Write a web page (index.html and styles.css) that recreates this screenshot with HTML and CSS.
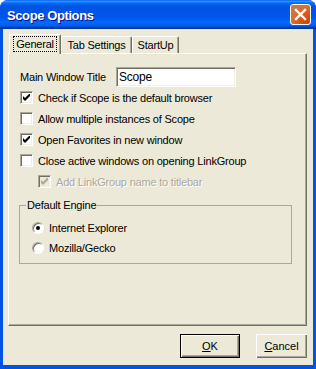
FILE: index.html
```html
<!DOCTYPE html>
<html lang="en">
<head>
  <meta charset="UTF-8">
  <title>Scope Options</title>
  <link rel="stylesheet" href="styles.css">
</head>
<body>
  <div class="window">
    <div class="titlebar">
      <span class="title">Scope Options</span>
      <div class="close">
        <svg width="13" height="13" viewBox="0 0 13 13">
          <path d="M2 2 L11 11 M11 2 L2 11" stroke="#fff" stroke-width="2.4" stroke-linecap="square" />
        </svg>
      </div>
    </div>

    <div class="client">
      <div class="tabs">
        <div class="tab active general"><span class="focus">General</span></div>
        <div class="tab settings">Tab Settings</div>
        <div class="tab startup">StartUp</div>
      </div>

      <div class="panel">
        <div class="field-row">
          <span class="field-label">Main Window Title</span>
          <div class="textbox">Scope</div>
        </div>

        <div class="options">
          <div class="check"><span class="box"><svg class="tick" width="7" height="7" viewBox="0 0 7 7"><polygon points="0,2 2,4 7,-1 7,2 2,7 0,5" /></svg></span>Check if Scope is the default browser</div>
          <div class="check"><span class="box"></span>Allow multiple instances of Scope</div>
          <div class="check"><span class="box"><svg class="tick" width="7" height="7" viewBox="0 0 7 7"><polygon points="0,2 2,4 7,-1 7,2 2,7 0,5" /></svg></span>Open Favorites in new window</div>
          <div class="check"><span class="box"></span>Close active windows on opening LinkGroup</div>
          <div class="check sub disabled"><span class="box"><svg class="tick" width="7" height="7" viewBox="0 0 7 7"><polygon points="0,2 2,4 7,-1 7,2 2,7 0,5" /></svg></span>Add LinkGroup name to titlebar</div>
        </div>

        <fieldset class="group">
          <legend>Default Engine</legend>
          <div class="radio-list">
            <div class="radio-row"><span class="radio on"></span>Internet Explorer</div>
            <div class="radio-row"><span class="radio"></span>Mozilla/Gecko</div>
          </div>
        </fieldset>
      </div>

      <div class="buttons">
        <button class="btn ok"><u>O</u>K</button>
        <button class="btn cancel"><u>C</u>ancel</button>
      </div>
    </div>
  </div>
</body>
</html>
```

FILE: styles.css
```css
body {
  margin: 0;
  font-family: 'Liberation Sans', Arial, sans-serif;
  font-size: 11px;
  letter-spacing: -0.2px;
  color: #000;
}

.window {
  width: 316px;
  height: 369px;
  display: flex;
  flex-direction: column;
  background: #0054e3;
  border-radius: 8px 8px 0 0;
  overflow: hidden;
}

.titlebar {
  height: 29px;
  flex: none;
  display: flex;
  align-items: center;
  justify-content: space-between;
  padding: 0 5px 0 7px;
  background: linear-gradient(to bottom, #0058ee 0%, #3593ff 4%, #288eff 6%, #127dff 8%, #036ffc 10%, #0262ee 14%, #0057e5 20%, #0054e3 24%, #0055eb 56%, #005bf5 66%, #026afe 76%, #0062ef 86%, #0052d6 92%, #0040ab 94%, #003092 100%);
}

.title {
  color: #fff;
  font-weight: bold;
  font-size: 13px;
  letter-spacing: -0.4px;
  padding-top: 2px;
  text-shadow: 1px 1px #0f1089;
}

.close {
  width: 21px;
  height: 21px;
  box-sizing: border-box;
  border: 1px solid #fff;
  border-radius: 3px;
  background: radial-gradient(circle at 90% 90%, #cc4600 0%, #dc6527 55%, #cd7546 70%), #e0613d;
  display: flex;
  align-items: center;
  justify-content: center;
}

.client {
  flex: 1;
  margin: 0 3px 4px;
  padding: 5px 6px 7px 5px;
  background: #ece9d8;
  display: flex;
  flex-direction: column;
}

/* tab strip */
.tabs {
  height: 19px;
  flex: none;
  display: flex;
  align-items: flex-end;
  padding-left: 1px;
  position: relative;
  z-index: 1;
}

.tab {
  height: 17px;
  box-sizing: border-box;
  border: 1px solid;
  border-color: #fff #716f64 transparent #fff;
  border-bottom: none;
  border-radius: 2px 2px 0 0;
  box-shadow: inset -1px 0 #aca899;
  display: flex;
  align-items: center;
  justify-content: center;
}

.tab.active {
  height: 20px;
  margin-bottom: -1px;
  background: #ece9d8;
  padding-bottom: 2px;
}

.general { width: 52px; }
.settings { width: 71px; }
.startup { width: 47px; }

.focus {
  outline: 1px dotted #000;
  padding: 0 2px;
  line-height: 14px;
}

.panel {
  flex: 1;
  border: 1px solid;
  border-color: #fff #716f64 #716f64 #fff;
  box-shadow: inset -1px -1px #aca899;
  padding: 13px 11px 0 11px;
  display: flex;
  flex-direction: column;
}

.field-row {
  display: flex;
  align-items: center;
  height: 20px;
}

.field-label {
  width: 96px;
}

.textbox {
  width: 120px;
  height: 20px;
  box-sizing: border-box;
  background: #fff;
  border: 1px solid;
  border-color: #aca899 #fff #fff #aca899;
  box-shadow: inset 1px 1px #716f64, inset -1px -1px #f1efe2;
  padding-left: 2px;
  display: flex;
  align-items: center;
  font-size: 12px;
}

.options {
  display: flex;
  flex-direction: column;
  gap: 8px;
  margin-top: 4px;
}

.check {
  display: flex;
  align-items: center;
  height: 13px;
  gap: 5px;
}

.check.sub {
  margin-left: 18px;
}

.box {
  width: 13px;
  height: 13px;
  box-sizing: border-box;
  flex: none;
  background: #fff;
  border: 1px solid;
  border-color: #aca899 #fff #fff #aca899;
  box-shadow: inset 1px 1px #716f64, inset -1px -1px #f1efe2;
  display: flex;
  align-items: center;
  justify-content: center;
}

.tick {
  fill: #000;
}

.disabled {
  color: #aca899;
  text-shadow: 1px 1px #fff;
}

.disabled .box {
  background: #ece9d8;
}

.disabled .tick {
  fill: #aca899;
}

/* default engine group */
.group {
  margin: 11px 0 0 -1px;
  padding: 0 0 9px 6px;
  width: 273px;
  box-sizing: border-box;
  min-width: 0;
  border: 1px solid #aca899;
}

.group legend {
  padding: 0 1px;
  line-height: 13px;
}

.radio-list {
  display: flex;
  flex-direction: column;
  gap: 7px;
  margin: 9px 0 0 6px;
}

.radio-row {
  display: flex;
  align-items: center;
  height: 13px;
  gap: 5px;
}

.radio {
  width: 12px;
  height: 12px;
  box-sizing: border-box;
  flex: none;
  border-radius: 50%;
  background: #fff;
  border: 1px solid;
  border-color: #aca899 #fff #fff #aca899;
  box-shadow: inset 1px 1px #716f64;
  display: flex;
  align-items: center;
  justify-content: center;
}

.radio.on::after {
  content: '';
  width: 4px;
  height: 4px;
  border-radius: 50%;
  background: #000;
}

.buttons {
  display: flex;
  justify-content: flex-end;
  gap: 16px;
  margin-top: 8px;
  height: 24px;
  flex: none;
}

.btn {
  height: 24px;
  box-sizing: border-box;
  padding: 0;
  border: none;
  background: #ece9d8;
  font: inherit;
  color: #000;
  box-shadow: inset 1px 1px #fff, inset -1px -1px #716f64, inset -2px -2px #aca899;
}

.btn.ok {
  width: 60px;
  border: 1px solid #000;
}

.btn.cancel {
  width: 51px;
}
```
